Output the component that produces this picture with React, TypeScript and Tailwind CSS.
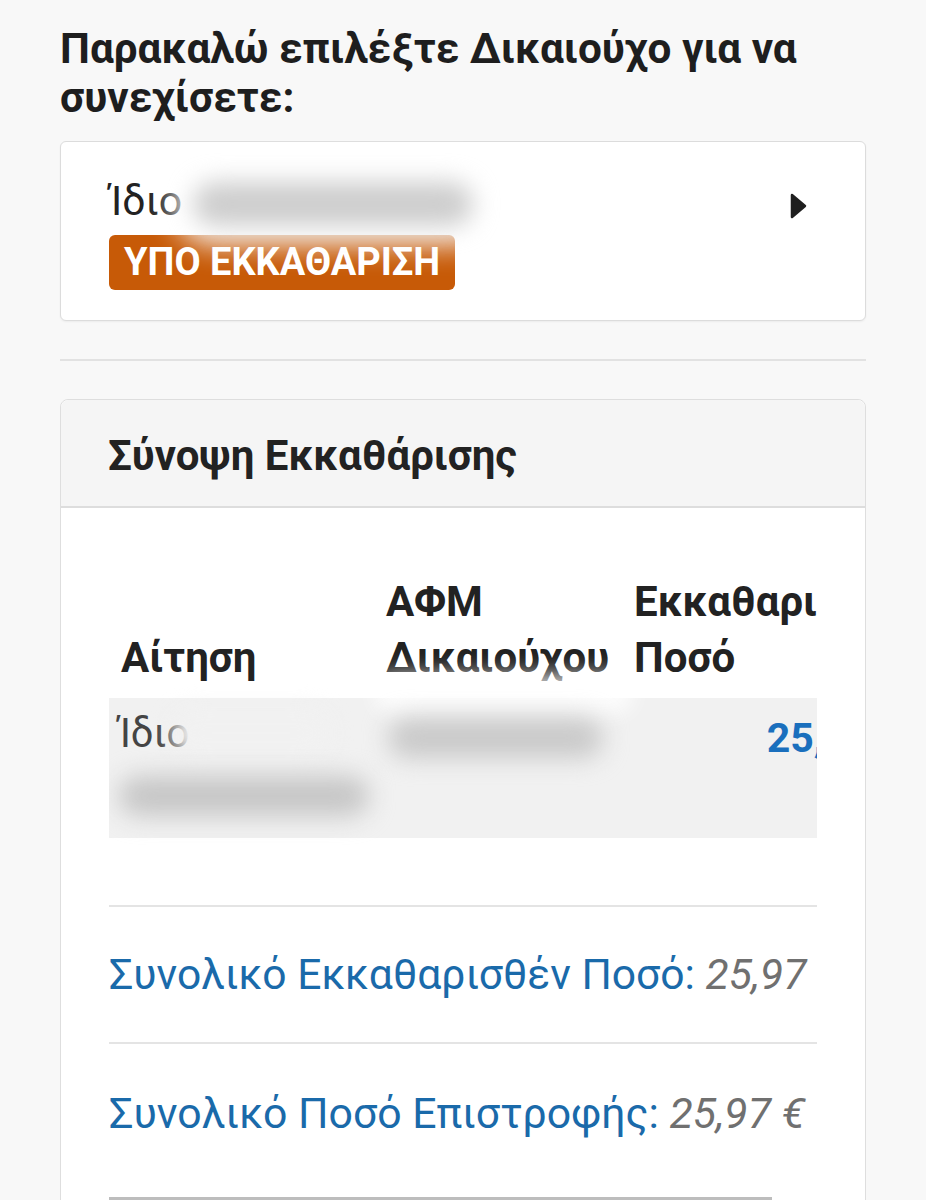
import React from "react";

function Blob({ className }: { className: string }) {
  return <div className={"absolute rounded-full " + className} />;
}

export default function App() {
  return (
    <div className="min-h-[1200px] h-[1200px] overflow-hidden bg-[#f8f8f8] px-[60px] pt-[24px] font-['Roboto',sans-serif] text-[#212121]">
      <h1 className="text-[42.3px] font-bold leading-[49px] text-[#1e1e1e]">
        Παρακαλώ επιλέξτε Δικαιούχο για να συνεχίσετε:
      </h1>

      {/* Beneficiary card */}
      <div className="relative mt-[19px] flex h-[180px] items-start justify-between rounded-[6px] border border-[#dcdcdc] bg-white pl-[48px] pr-[58px] shadow-[0_1px_2px_rgba(0,0,0,0.05)]">
        <div className="flex flex-col items-start pt-[36px]">
          <div className="text-[41px] leading-[46px] text-[#222]">Ίδιο</div>
          <div className="mt-[11px] rounded-[6px] bg-[#c75a07] px-[15px] text-[38px] font-bold leading-[55px] text-white">
            ΥΠΟ ΕΚΚΑΘΑΡΙΣΗ
          </div>
        </div>
        <svg width="17" height="26" viewBox="0 0 17 26" className="mt-[51px]">
          <path d="M2 2 L15 13 L2 24 Z" fill="#1f1f1f" strokeLinejoin="round" stroke="#1f1f1f" strokeWidth="2.5" />
        </svg>
        <Blob className="left-[110px] top-[18px] h-[86px] w-[330px] bg-white/85 blur-[14px]" />
        <Blob className="left-[132px] top-[40px] h-[44px] w-[280px] bg-[#cdcdcd] blur-[12px]" />
      </div>

      <div className="mt-[38px] h-[2px] bg-[#e2e2e2]" />

      {/* Summary card */}
      <div className="mt-[38px] rounded-t-[8px] border border-[#dedede] bg-white">
        <div className="flex h-[108px] items-center rounded-t-[8px] border-b-2 border-[#dddddd] bg-[#f5f5f5] px-[47px] pt-[4px]">
          <h2 className="text-[42px] font-bold text-[#222]">Σύνοψη Εκκαθάρισης</h2>
        </div>
        <div className="px-[48px] pt-[66px]">
          <div className="overflow-hidden">
            <div className="w-[774px]">
              <table className="w-[774px] table-fixed border-collapse">
                <colgroup>
                  <col className="w-[265px]" />
                  <col className="w-[248px]" />
                  <col className="w-[261px]" />
                </colgroup>
                <thead>
                  <tr>
                    <th className="px-[12px] pb-[12px] text-left align-bottom text-[42px] font-bold leading-[56px] text-[#222]">Αίτηση</th>
                    <th className="whitespace-nowrap px-[12px] pb-[12px] text-left align-bottom text-[42px] font-bold leading-[56px] text-[#222]">
                      ΑΦΜ
                      <br />
                      Δικαιούχου
                    </th>
                    <th className="whitespace-nowrap px-[12px] pb-[12px] text-left align-bottom text-[42px] font-bold leading-[56px] text-[#222]">
                      Εκκαθαρισμένο
                      <br />
                      Ποσό
                    </th>
                  </tr>
                </thead>
                <tbody>
                  <tr className="h-[140px] bg-[#f1f1f1]">
                    <td className="relative px-[9px] pt-[14px] align-top text-[40px] leading-[44px] text-[#444]">
                      Ίδιο
                      <Blob className="left-[62px] top-[10px] h-[50px] w-[160px] bg-[#f1f1f1] blur-[10px]" />
                      <Blob className="left-[10px] top-[78px] h-[40px] w-[250px] bg-[#c6c6c6] blur-[12px]" />
                    </td>
                    <td className="relative align-top">
                      <Blob className="left-[0px] top-[-24px] h-[40px] w-[260px] bg-white/80 blur-[10px]" />
                      <Blob className="left-[14px] top-[20px] h-[40px] w-[215px] bg-[#c9c9c9] blur-[12px]" />
                    </td>
                    <td className="px-[12px] pt-[18px] text-right align-top text-[41px] font-bold leading-[44px] text-[#1a6fbd]">25,97</td>
                  </tr>
                </tbody>
              </table>

              <div className="mt-[67px] h-[2px] w-[710px] bg-[#e4e4e4]" />
              <div className="flex h-[135px] w-[710px] items-center whitespace-nowrap text-[42.6px] text-[#1a6aaa]">
                Συνολικό Εκκαθαρισθέν Ποσό:&nbsp;<span className="italic text-[#707070]">25,97</span>
              </div>
              <div className="h-[2px] w-[710px] bg-[#e4e4e4]" />
              <div className="flex h-[138px] w-[710px] items-center whitespace-nowrap text-[42.8px] text-[#1a6aaa]">
                Συνολικό Ποσό Επιστροφής:&nbsp;<span className="italic text-[#707070]">25,97 €</span>
              </div>
              <div className="mt-[15px] h-[5px] w-[663px] bg-[#bdbdbd]" />
            </div>
          </div>
        </div>
      </div>
    </div>
  );
}
